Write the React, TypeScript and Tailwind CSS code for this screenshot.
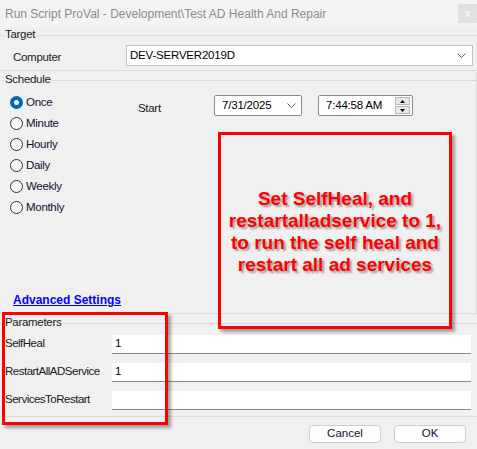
import React from "react";

const ui = { fontFamily: '"Liberation Sans", Arial, sans-serif' };

const Chevron: React.FC = () => (
  <svg width="9" height="5" viewBox="0 0 9 5" className="shrink-0">
    <path d="M0.5 0.5 L4.5 4.5 L8.5 0.5" fill="none" stroke="#606060" strokeWidth="1" />
  </svg>
);

const Radio: React.FC<{ label: string; checked?: boolean }> = ({ label, checked }) => (
  <div className="flex items-center h-[21px]">
    {checked ? (
      <div className="w-[13px] h-[13px] rounded-full bg-[#0067c0] flex items-center justify-center">
        <div className="w-[5px] h-[5px] rounded-full bg-white" />
      </div>
    ) : (
      <div className="w-[13px] h-[13px] rounded-full border border-[#333] bg-[#f7f7f7]" />
    )}
    <span className="ml-[3px] text-[11.5px] tracking-[-0.3px] text-[#101030]">{label}</span>
  </div>
);

// group header: caption sitting on the top line of the frame
const GroupHeader: React.FC<{ title: string }> = ({ title }) => (
  <div className="flex items-center h-[16px]">
    <div className="w-[4px] border-t border-[#dcdcdc]" />
    <span className="px-[1px] text-[11.5px] tracking-[-0.3px] text-[#1a1a1a] leading-none">{title}</span>
    <div className="flex-1 border-t border-[#dcdcdc]" />
  </div>
);

const ParamRow: React.FC<{ name: string; value?: string }> = ({ name, value }) => (
  <div className="flex items-center h-[28px]">
    <span className="w-[112px] pl-[5px] text-[11.5px] tracking-[-0.5px] text-[#1a1a1a]">{name}</span>
    <div className="w-[359px] h-[19px] bg-white border-b border-[#8a8a8a] flex items-center pl-[3px] text-[11.5px] text-black">
      {value}
    </div>
  </div>
);

export default function App() {
  return (
    <div className="w-[477px] h-[449px] bg-[#f0f0f0] relative overflow-hidden" style={ui}>
      {/* Title bar */}
      <div className="h-[27px] bg-[#f3f3f3] flex items-center justify-between pl-[5px]">
        <span className="text-[12px] text-[#8c8c8c]">Run Script ProVal - Development\Test AD Health And Repair</span>
        <div className="w-[19px] h-[19px] bg-[#e0e0e0] flex items-center justify-center text-[11px] font-bold text-[#f8f8f8] self-start mt-[4px]">
          x
        </div>
      </div>

      {/* Target */}
      <div className="border-b border-[#dcdcdc] pb-[4px]">
        <GroupHeader title="Target" />
        <div className="flex items-center mt-[2px] h-[21px]">
          <span className="w-[126px] pl-[13px] pt-[5px] text-[11.5px] tracking-[-0.3px] text-[#1a1a1a]">Computer</span>
          <div className="w-[347px] h-[21px] bg-white border border-[#c4c4c4] flex items-center justify-between pl-[3px] pr-[6px] text-[11.5px] tracking-[-0.2px] text-black">
            <span>DEV-SERVER2019D</span>
            <Chevron />
          </div>
        </div>
      </div>

      {/* Schedule */}
      <div className="border-r border-b border-[#dcdcdc] h-[242px] mt-[1px]">
        <GroupHeader title="Schedule" />
        <div className="flex mt-[4px]">
          <div className="flex flex-col pl-[10px] w-[138px]">
            <Radio label="Once" checked />
            <Radio label="Minute" />
            <Radio label="Hourly" />
            <Radio label="Daily" />
            <Radio label="Weekly" />
            <Radio label="Monthly" />
          </div>
          <div className="flex items-start pt-[3px]">
            <span className="w-[76px] pt-[5px] text-[11.5px] tracking-[-0.3px] text-[#1a1a1a]">Start</span>
            <div className="w-[88px] h-[21px] bg-white border border-[#8a8a8a] rounded-[2px] flex items-center justify-between pl-[7px] pr-[5px] text-[11.5px] tracking-[-0.2px] text-black">
              <span>7/31/2025</span>
              <Chevron />
            </div>
            <div className="ml-[16px] w-[95px] h-[21px] bg-white border border-[#8a8a8a] rounded-[2px] flex items-center justify-between pl-[7px] pr-[2px] text-[11.5px] tracking-[-0.2px] text-black">
              <span>7:44:58 AM</span>
              <div className="flex flex-col gap-[1px]">
                <div className="w-[15px] h-[8px] bg-[#e8e8e8] border border-[#b8b8b8] flex items-center justify-center">
                  <svg width="5" height="3" viewBox="0 0 5 3"><path d="M0 3 L2.5 0 L5 3 Z" fill="#000" /></svg>
                </div>
                <div className="w-[15px] h-[8px] bg-[#e8e8e8] border border-[#b8b8b8] flex items-center justify-center">
                  <svg width="5" height="3" viewBox="0 0 5 3"><path d="M0 0 L2.5 3 L5 0 Z" fill="#000" /></svg>
                </div>
              </div>
            </div>
          </div>
        </div>
        <div className="mt-[69px] pl-[13px]">
          <span className="text-[12px] font-bold text-[#0000ff] underline">Advanced Settings</span>
        </div>
      </div>

      {/* Parameters */}
      <div className="border-b border-[#dcdcdc] mt-[1px] pb-[2px]">
        <GroupHeader title="Parameters" />
        <div className="mt-[-1px]">
          <ParamRow name="SelfHeal" value="1" />
          <ParamRow name="RestartAllADService" value="1" />
          <ParamRow name="ServicesToRestart" />
        </div>
      </div>

      {/* Buttons */}
      <div className="flex justify-end gap-[13px] pr-[11px] mt-[8px]">
        <button className="w-[72px] h-[18px] bg-[#fdfdfd] border border-[#cfcfcf] rounded-[4px] text-[11.5px] text-[#101030] leading-none">
          Cancel
        </button>
        <button className="w-[72px] h-[18px] bg-[#fdfdfd] border border-[#cfcfcf] rounded-[4px] text-[11.5px] text-[#101030] leading-none">
          OK
        </button>
      </div>

      {/* Annotation overlays */}
      <div className="absolute left-[218px] top-[132px] w-[234px] h-[197px] border-[3px] border-[#ff0000] shadow-[3px_3px_3px_rgba(0,0,0,0.35)] flex items-center justify-center">
        <p
          className="text-center text-[19px] leading-[22px] font-bold text-[#ff0000] pt-[2px]"
          style={{ textShadow: "2px 2px 2px rgba(0,0,0,0.35)" }}
        >
          Set SelfHeal, and
          <br />
          restartalladservice to 1,
          <br />
          to run the self heal and
          <br />
          restart all ad services
        </p>
      </div>
      <div className="absolute left-[2px] top-[312px] w-[166px] h-[113px] border-[3px] border-[#ff0000] shadow-[3px_3px_3px_rgba(0,0,0,0.35)]" />
    </div>
  );
}
